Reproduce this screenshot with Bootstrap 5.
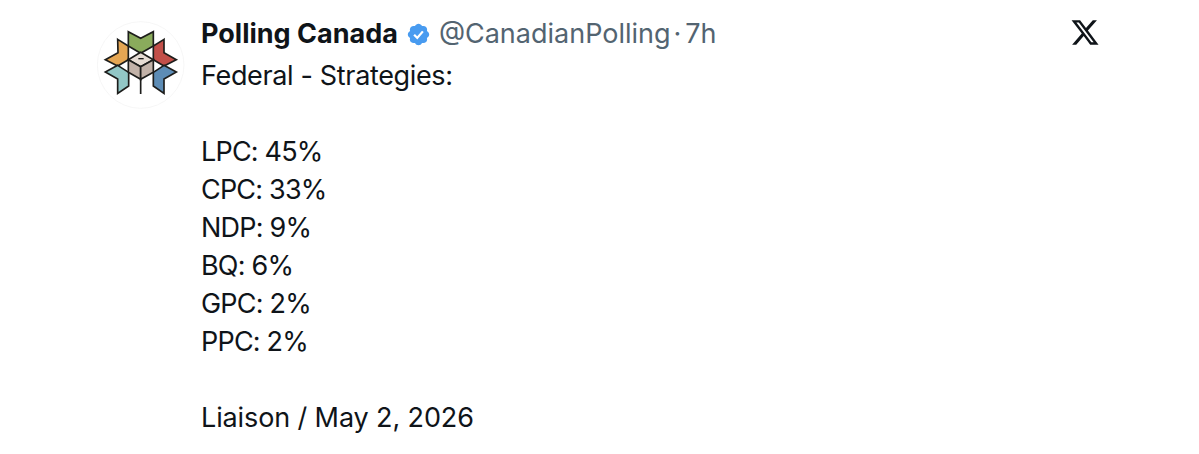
<!doctype html>
<html lang="en"><head><meta charset="utf-8"><title>Polling Canada</title>
<link href="https://cdn.jsdelivr.net/npm/bootstrap@5.3.0/dist/css/bootstrap.min.css" rel="stylesheet">
<style>
html,body{height:100%;background:#fff}
.tweet-wrap{padding:15px 100px 0 97px;font-family:Inter,"Liberation Sans",sans-serif;color:#0f1419}
.avatar-art{width:88px;height:88px;margin-top:6px;flex:none}
.tweet-main{margin-left:16px}
.tweet-head{font-size:27px;line-height:38px;height:38px;margin-bottom:4px}
.tweet-name{font-weight:700}
.tweet-handle{color:#536471;font-weight:400}
.tweet-sep{color:#536471;margin:0 4px 0 3px}
.tick{width:25px;height:25px;margin:1px 8px 0 8px;flex:none}
.tweet-text{font-size:27px;line-height:38px;letter-spacing:-.35px;white-space:pre-line;margin:0}
.tally-lines{letter-spacing:-.8px}
.source-line{letter-spacing:-.12px}
.x-mark{width:30px;height:28px;margin-top:5px;margin-right:-1px;flex:none}
</style></head>
<body>
<div class="tweet-wrap d-flex align-items-start">
<svg class="avatar-art" viewBox="21 33 264 264" aria-hidden="true">
<circle cx="152" cy="165" r="130" fill="#fff" stroke="#f2f2f2" stroke-width="2"/>
<g stroke="#1d1d1b" stroke-width="5" stroke-linejoin="miter">
<path fill="#e5a653" d="M83 88 115 108V149L83 168 46 149 84 128Z"/>
<path fill="#c24f49" d="M222 88 190 108V149L222 168 259 149 222 128Z"/>
<path fill="#92c7c6" d="M83 166 116 187V228L83 250V207L46 186Z"/>
<path fill="#5d8cb5" d="M222 166 190 187V228L222 250V207L259 186Z"/>
<path fill="#8aab5c" d="M115 65 152 85 190 65V108L152 130 115 108Z"/>
<path fill="#e6dcd3" d="M152 127 190 149 152 170 115 149Z"/>
<path fill="#c2b2a8" d="M115 149 152 170V208L115 187Z"/>
<path fill="#c2b2a8" d="M190 149 152 170V208L190 187Z"/>
<path fill="none" d="M152 208V252"/>
<path fill="none" stroke-width="4" d="M145 146H161"/>
</g>
</svg>
<div class="tweet-main flex-grow-1">
<div class="tweet-head d-flex align-items-center">
<span class="tweet-name">Polling Canada</span>
<svg class="tick" viewBox="0 0 24 24" aria-hidden="true"><path fill="#489bf0" d="M22.25 12c0-1.43-.88-2.67-2.19-3.34.46-1.39.2-2.9-.81-3.91s-2.52-1.27-3.91-.81c-.66-1.31-1.91-2.19-3.34-2.19s-2.67.88-3.33 2.19c-1.4-.46-2.91-.2-3.92.81s-1.26 2.52-.8 3.91c-1.31.67-2.2 1.91-2.2 3.34s.89 2.67 2.2 3.34c-.46 1.39-.21 2.9.8 3.91s2.52 1.26 3.91.81c.67 1.31 1.91 2.19 3.34 2.19s2.68-.88 3.34-2.19c1.39.45 2.9.2 3.91-.81s1.27-2.52.81-3.91c1.31-.67 2.19-1.91 2.19-3.34z"/><path fill="none" stroke="#fff" stroke-width="2.2" d="M7.8 12.3 10.8 15.3 16.2 9"/></svg>
<span class="tweet-handle">@CanadianPolling</span><span class="tweet-sep">·</span><span class="tweet-handle">7h</span>
</div>
<p class="tweet-text">Federal - Strategies:

<span class="tally-lines">LPC: 45%
CPC: 33%
NDP: 9%
BQ: 6%
GPC: 2%
PPC: 2%</span>

<span class="source-line">Liaison / May 2, 2026</span></p>
</div>
<svg class="x-mark" viewBox="0 0 24 22" aria-hidden="true"><path fill="#0f1419" d="M18.244 0h3.308l-7.227 8.26 8.502 11.24H16.17l-5.214-6.817L4.99 19.5H1.68l7.73-8.835L1.254 0H8.08l4.713 6.231zm-1.161 17.52h1.833L7.084 1.876H5.117z"/></svg>
</div>
</body></html>
